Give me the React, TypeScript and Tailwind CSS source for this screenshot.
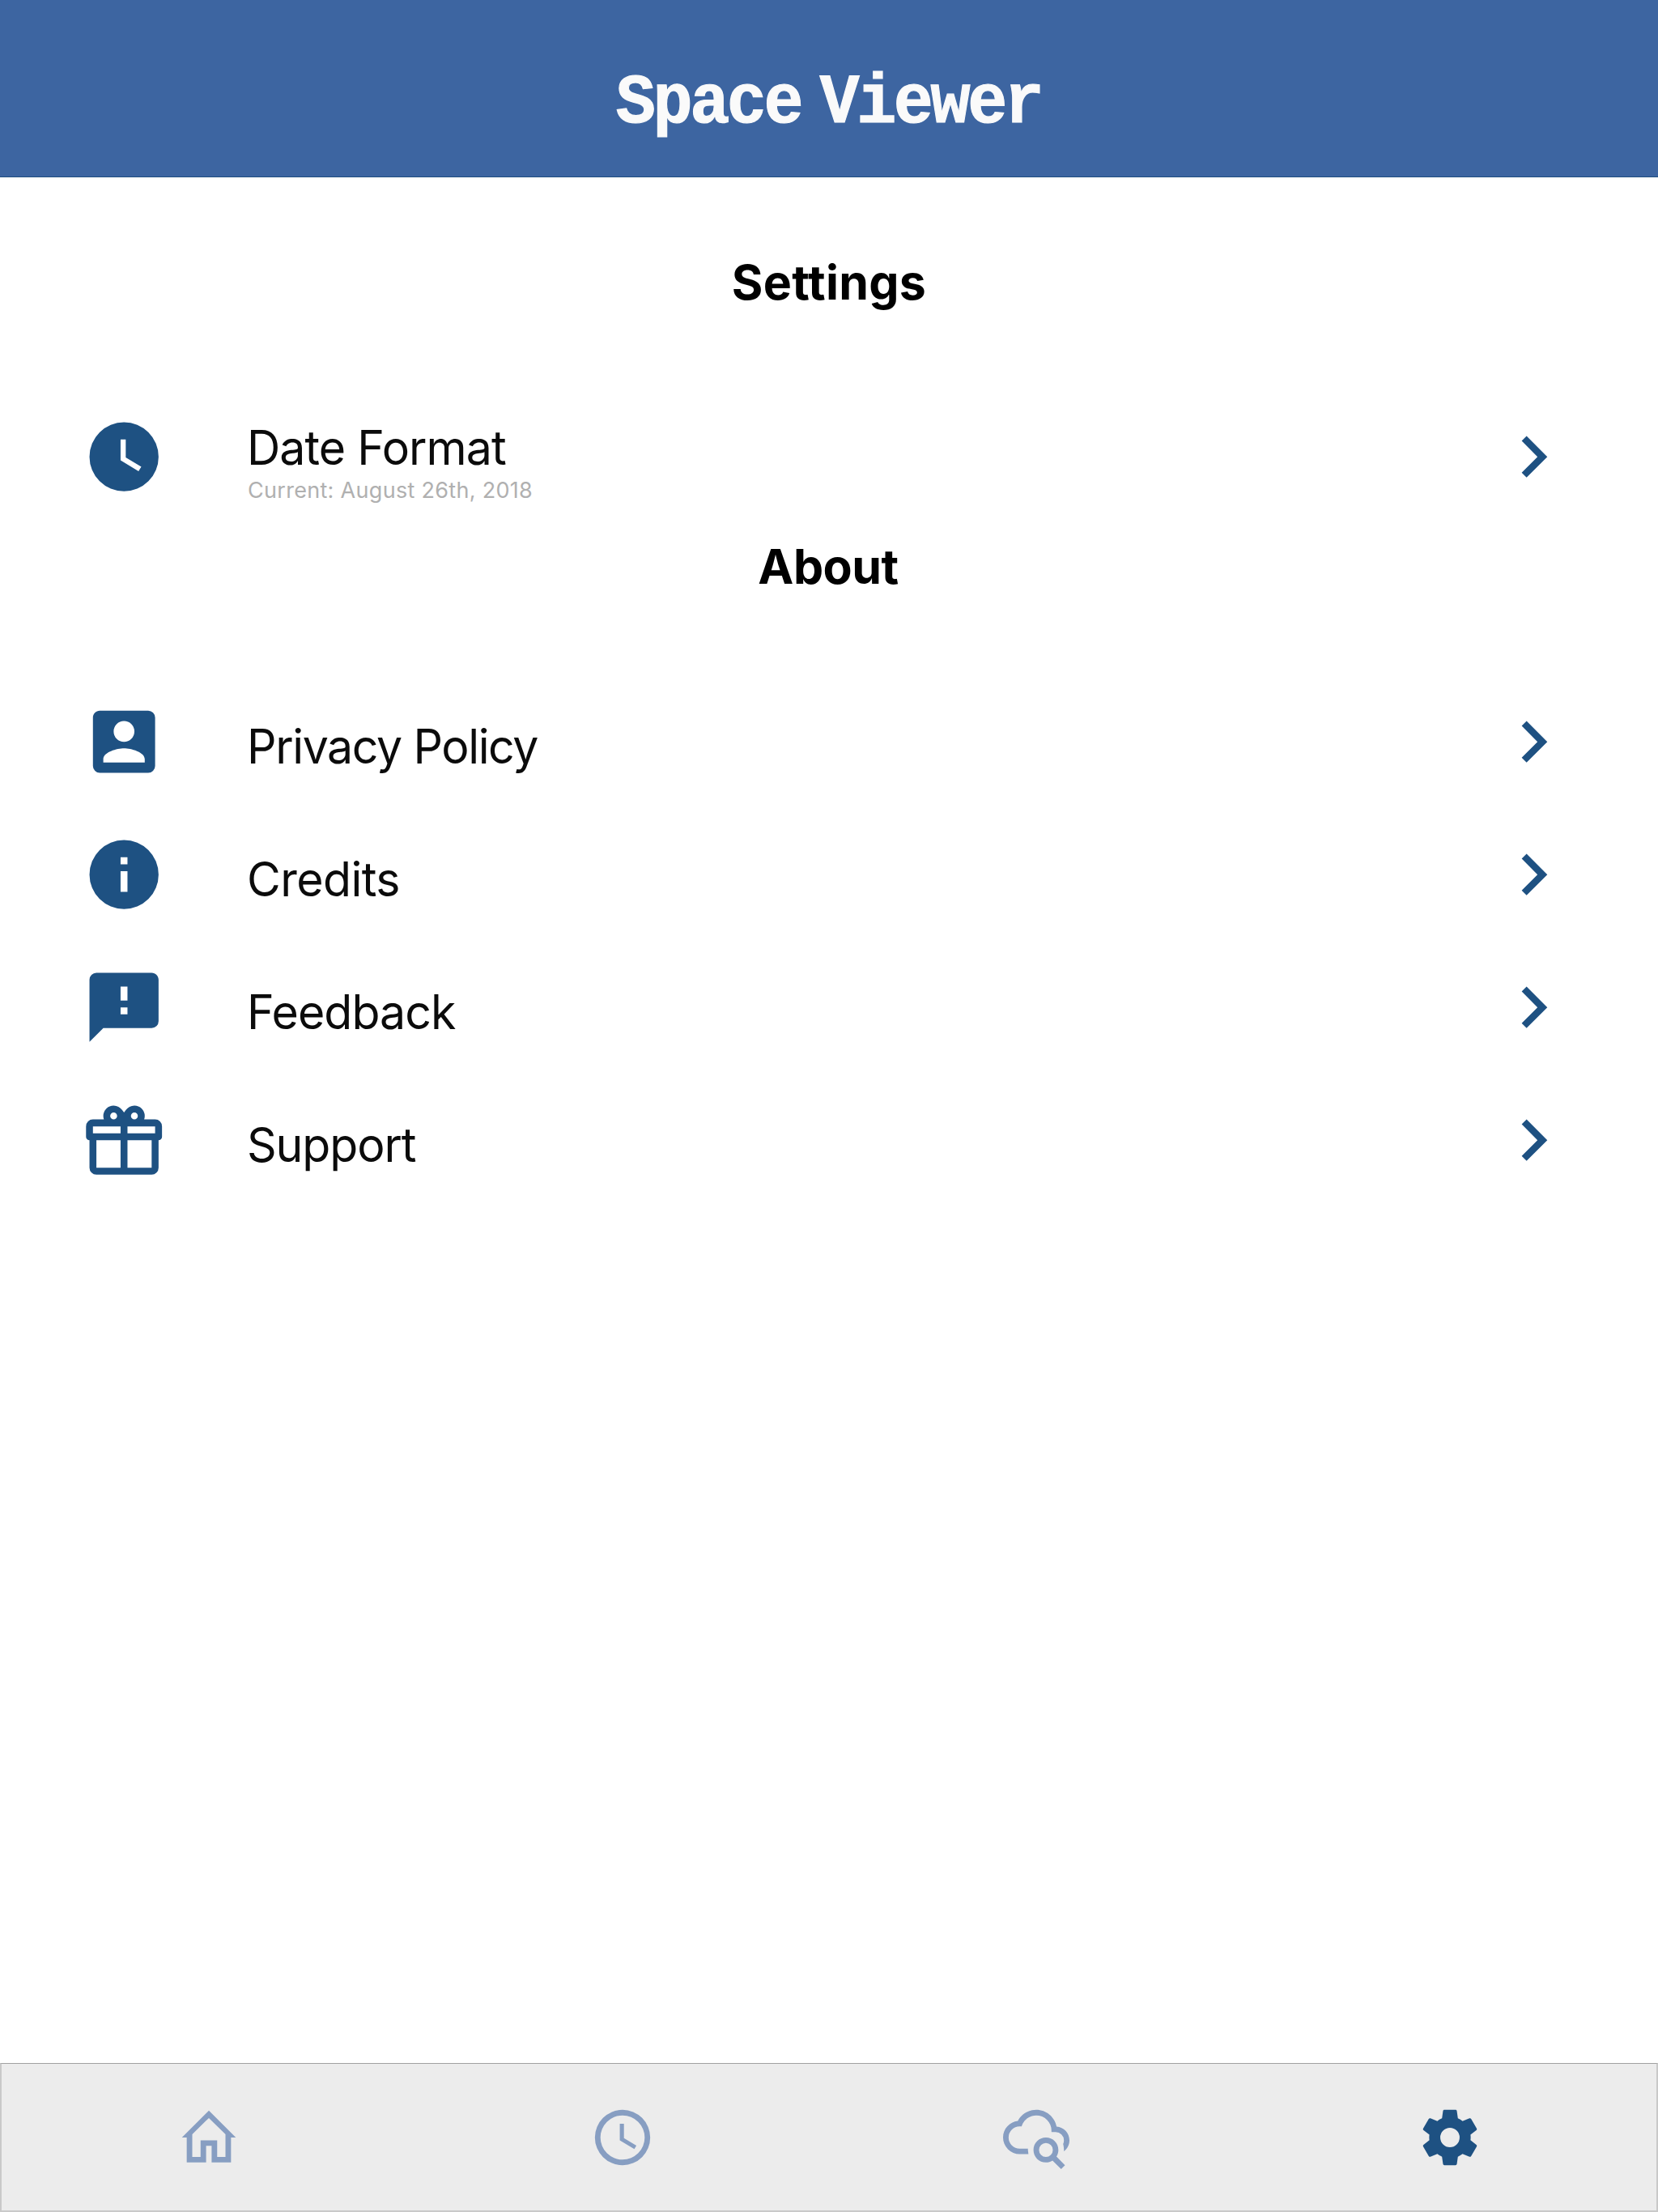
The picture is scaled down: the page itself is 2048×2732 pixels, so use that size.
const icons = {
  clock:
    'M12 2A10 10 0 0 0 2 12A10 10 0 0 0 12 22A10 10 0 0 0 22 12A10 10 0 0 0 12 2M16.2 16.2L11 13V7H12.5V12.2L17 14.9L16.2 16.2Z',
  account:
    'M6 17C6 15 10 13.9 12 13.9C14 13.9 18 15 18 17V18H6M15 9A3 3 0 0 1 12 12A3 3 0 0 1 9 9A3 3 0 0 1 12 6A3 3 0 0 1 15 9M3 5V19A2 2 0 0 0 5 21H19A2 2 0 0 0 21 19V5A2 2 0 0 0 19 3H5C3.89 3 3 3.9 3 5Z',
  info: 'M13 9H11V7H13M13 17H11V11H13M12 2A10 10 0 0 0 2 12A10 10 0 0 0 12 22A10 10 0 0 0 22 12A10 10 0 0 0 12 2Z',
  message: 'M13 10H11V6H13M13 14H11V12H13M20 2H4A2 2 0 0 0 2 4V22L6 18H20A2 2 0 0 0 22 16V4C22 2.89 21.1 2 20 2Z',
  gift: 'M22 12V20A2 2 0 0 1 20 22H4A2 2 0 0 1 2 20V12A1 1 0 0 1 1 11V8A2 2 0 0 1 3 6H6.17C6.06 5.69 6 5.35 6 5A3 3 0 0 1 9 2C10 2 10.88 2.5 11.43 3.24V3.23L12 4L12.57 3.23V3.24C13.12 2.5 14 2 15 2A3 3 0 0 1 18 5C18 5.35 17.94 5.69 17.83 6H21A2 2 0 0 1 23 8V11A1 1 0 0 1 22 12M4 20H11V12H4V20M20 20V12H13V20H20M9 4A1 1 0 0 0 8 5A1 1 0 0 0 9 6A1 1 0 0 0 10 5A1 1 0 0 0 9 4M15 4A1 1 0 0 0 14 5A1 1 0 0 0 15 6A1 1 0 0 0 16 5A1 1 0 0 0 15 4M3 8V10H11V8H3M13 8V10H21V8H13Z',
  chevron: 'M8.59 16.58L13.17 12L8.59 7.41L10 6L16 12L10 18L8.59 16.58Z',
  home: 'M12 2.3L21.75 12H20V21H13V15H11V21H4V12H2.25L12 2.3M9 19V13H15V19H18V10.81L12 4.94L6 10.81V19H9Z',
  clockOutline:
    'M12 20A8 8 0 0 0 20 12A8 8 0 0 0 12 4A8 8 0 0 0 4 12A8 8 0 0 0 12 20M12 2A10 10 0 0 1 22 12A10 10 0 0 1 12 22A10 10 0 0 1 2 12A10 10 0 0 1 12 2M12.5 7V12.25L17 14.92L16.25 16.15L11 13V7H12.5Z',
  cloudSearch:
    'M15.5 12C18 12 20 14 20 16.5C20 17.38 19.75 18.21 19.31 18.9L22.39 22L21 23.39L17.88 20.32C17.19 20.75 16.37 21 15.5 21C13 21 11 19 11 16.5C11 14 13 12 15.5 12M15.5 14A2.5 2.5 0 0 0 13 16.5A2.5 2.5 0 0 0 15.5 19A2.5 2.5 0 0 0 18 16.5A2.5 2.5 0 0 0 15.5 14M19.35 8.03C21.95 8.22 24 10.36 24 13C24 14.58 23.27 16 22.02 16.99C22.02 16.1 21.95 15.2 21.72 14.35C21.9 13.95 22 13.5 22 13A3 3 0 0 0 19 10H17.5V9.5A5.5 5.5 0 0 0 12 4C9.5 4 7.37 5.69 6.71 8H6A4 4 0 0 0 2 12A4 4 0 0 0 6 16H9V16.5L9.17 18H6A6 6 0 0 1 0 12C0 8.9 2.34 6.36 5.35 6.03C6.6 3.64 9.11 2 12 2C15.64 2 18.67 4.6 19.35 8.03Z',
  cog: 'M12 15.5A3.5 3.5 0 0 1 8.5 12A3.5 3.5 0 0 1 12 8.5A3.5 3.5 0 0 1 15.5 12A3.5 3.5 0 0 1 12 15.5M19.43 12.97C19.47 12.65 19.5 12.33 19.5 12C19.5 11.67 19.47 11.34 19.43 11L21.54 9.37C21.73 9.22 21.78 8.95 21.66 8.73L19.66 5.27C19.54 5.05 19.27 4.96 19.05 5.05L16.56 6.05C16.04 5.66 15.5 5.32 14.87 5.07L14.5 2.42C14.46 2.18 14.25 2 14 2H10C9.75 2 9.54 2.18 9.5 2.42L9.13 5.07C8.5 5.32 7.96 5.66 7.44 6.05L4.95 5.05C4.73 4.96 4.46 5.05 4.34 5.27L2.34 8.73C2.21 8.95 2.27 9.22 2.46 9.37L4.57 11C4.53 11.34 4.5 11.67 4.5 12C4.5 12.33 4.53 12.65 4.57 12.97L2.46 14.63C2.27 14.78 2.21 15.05 2.34 15.27L4.34 18.73C4.46 18.95 4.73 19.03 4.95 18.95L7.44 17.94C7.96 18.34 8.5 18.68 9.13 18.93L9.5 21.58C9.54 21.82 9.75 22 10 22H14C14.25 22 14.46 21.82 14.5 21.58L14.87 18.93C15.5 18.67 16.04 18.34 16.56 17.94L19.05 18.95C19.27 19.03 19.54 18.95 19.66 18.73L21.66 15.27C21.78 15.05 21.73 14.78 21.54 14.63L19.43 12.97Z',
};

type IconName = keyof typeof icons;

function Icon({ name, className }: { name: IconName; className: string }) {
  return (
    <svg viewBox="0 0 24 24" fill="currentColor" fillRule="evenodd" overflow="visible" aria-hidden="true" className={className}>
      <path d={icons[name]} />
    </svg>
  );
}

function Heading({ title, className }: { title: string; className: string }) {
  return <h2 className={`text-center text-[59px] leading-[72px] font-bold text-black ${className}`}>{title}</h2>;
}

interface RowProps {
  icon: IconName;
  label: string;
  labelClass: string;
  detail?: string;
}

function Row({ icon, label, labelClass, detail }: RowProps) {
  return (
    <button type="button" className="flex h-41 w-full items-center text-left">
      <span className="flex w-[305px] shrink-0 justify-center pl-0.5 text-[#1e5182]">
        <Icon name={icon} className="size-[102.4px]" />
      </span>
      <span className="flex flex-1 flex-col pt-[11px]">
        <span className={`origin-left scale-x-97 text-[59px] leading-[72px] text-[#0b0b0b] ${labelClass}`}>
          {label}
        </span>
        {detail && (
          <span className="pl-px text-[27px] leading-[33px] tracking-[0.3px] text-[#b0b0b0]">{detail}</span>
        )}
      </span>
      <span className="flex w-[308px] shrink-0 justify-center text-[#1e5182]">
        <Icon name="chevron" className="size-[102.4px]" />
      </span>
    </button>
  );
}

const aboutRows: RowProps[] = [
  { icon: 'account', label: 'Privacy Policy', labelClass: 'tracking-[-1.45px]' },
  { icon: 'info', label: 'Credits', labelClass: 'tracking-[-0.6px]' },
  { icon: 'message', label: 'Feedback', labelClass: 'tracking-[-1px]' },
  { icon: 'gift', label: 'Support', labelClass: 'tracking-[-1.15px]' },
];

const tabs: { icon: IconName; label: string; active?: boolean }[] = [
  { icon: 'home', label: 'Home' },
  { icon: 'clockOutline', label: 'History' },
  { icon: 'cloudSearch', label: 'Search' },
  { icon: 'cog', label: 'Settings', active: true },
];

export default function App() {
  return (
    <div className="flex h-[2732px] w-[2048px] flex-col overflow-hidden bg-white font-['Inter',sans-serif]">
      <header className="flex h-[219px] shrink-0 justify-center border-b border-[#1f4d80] bg-[#3d65a1] pt-[83px]">
        <h1 className="scale-x-93 whitespace-nowrap font-['Liberation_Mono',monospace] text-[88px] leading-[90px] font-bold tracking-[-3.7px] text-[#fafafa] [-webkit-text-stroke:1.2px_#fafafa] [word-spacing:-24px]">
          Space Viewer
        </h1>
      </header>

      <main className="flex-1">
        <section className="pt-[94px]">
          <Heading title="Settings" className="mb-[97px] tracking-[0.3px]" />
          <Row icon="clock" label="Date Format" labelClass="tracking-[-1px]" detail="Current: August 26th, 2018" />
        </section>
        <section className="pt-[18px]">
          <Heading title="About" className="mb-[98px] pr-0.5 tracking-[-0.5px]" />
          {aboutRows.map((row) => (
            <Row key={row.label} {...row} />
          ))}
        </section>
      </main>

      <nav className="grid h-[184px] shrink-0 grid-cols-4 border-x-2 border-t border-b-2 border-x-[#c9c9c9] border-t-[#a0a0a0] border-b-[#c9c9c9] bg-[#ececec]">
        {tabs.map(({ icon, label, active }) => (
          <button
            key={label}
            type="button"
            aria-label={label}
            className={`flex items-center justify-center pt-px ${active ? 'text-[#1e5182]' : 'text-[#879ec2]'}`}
          >
            <Icon name={icon} className="size-[82px]" />
          </button>
        ))}
      </nav>
    </div>
  );
}
